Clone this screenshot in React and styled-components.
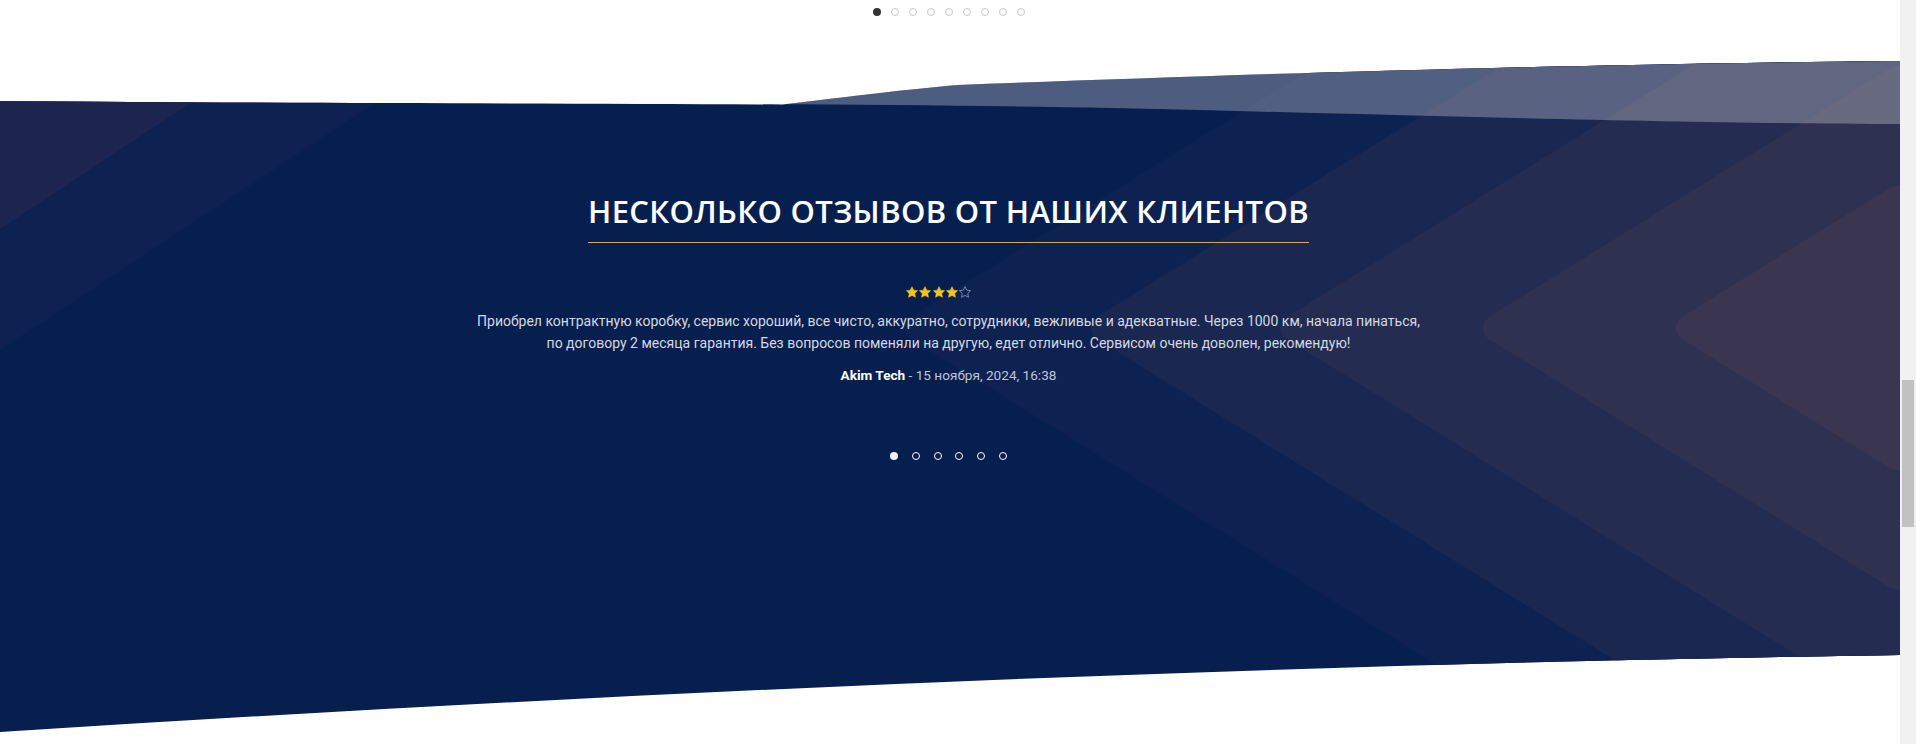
import React from 'react';
import styled, { createGlobalStyle } from 'styled-components';

const GlobalStyle = createGlobalStyle`
  html, body { margin: 0; padding: 0; background: #ffffff; overflow: hidden; }
  #root { height: 100vh; }
  * { box-sizing: border-box; }
`;

const Page = styled.div`
  display: flex;
  width: 100%;
  height: 744px;
  overflow: hidden;
  background: #ffffff;
`;

const Main = styled.main`
  flex: 1;
  min-width: 0;
  display: flex;
  flex-direction: column;
`;

const TopDots = styled.div`
  height: 40px;
  display: flex;
  justify-content: center;
  align-items: flex-start;
  gap: 10px;
  padding: 8px 3px 0 0;
`;

const TopDot = styled.span`
  width: 8px;
  height: 8px;
  border-radius: 50%;
  background: ${(p) => (p.$active ? '#333333' : 'transparent')};
  border: ${(p) => (p.$active ? 'none' : '1px solid #c8c8c8')};
`;

const Section = styled.section`
  position: relative;
  flex: 1;
  display: flex;
  flex-direction: column;
  align-items: center;
  padding: 153px 3px 0 0;
`;

const Backdrop = styled.svg`
  position: absolute;
  inset: 0;
  width: 100%;
  height: 100%;
  z-index: 0;
  display: block;
`;

const Content = styled.div`
  position: relative;
  z-index: 1;
  display: flex;
  flex-direction: column;
  align-items: center;
`;

const Title = styled.h2`
  margin: 0;
  font-family: 'Open Sans', 'Liberation Sans', sans-serif;
  font-weight: 600;
  font-size: 31px;
  line-height: 1.2;
  letter-spacing: 0.35px;
  color: #ffffff;
  text-transform: uppercase;
  padding-bottom: 12px;
  border-bottom: 1px solid #dca84a;
  white-space: nowrap;
`;

const Stars = styled.div`
  margin: 43px 20px 0 0;
  display: flex;
  gap: 1.3px;
  height: 12px;
`;

const StarIcon = styled.svg`
  width: 12px;
  height: 12px;
  display: block;
`;

const Quote = styled.p`
  margin: 12px 0 0;
  font-family: 'Roboto', 'Liberation Sans', sans-serif;
  font-size: 14px;
  line-height: 22px;
  color: #d4d8e0;
  text-align: center;
  white-space: nowrap;
`;

const Author = styled.div`
  margin-top: 10px;
  font-family: 'Roboto', 'Liberation Sans', sans-serif;
  font-size: 13.6px;
  line-height: 22px;
  color: #bfc5d2;
`;

const AuthorName = styled.strong`
  font-weight: 700;
  color: #ffffff;
`;

const Pager = styled.div`
  margin-top: 66px;
  display: flex;
  gap: 13.7px;
`;

const PagerDot = styled.span`
  width: 8px;
  height: 8px;
  border-radius: 50%;
  background: ${(p) => (p.$active ? '#f0f0f0' : 'transparent')};
  border: ${(p) => (p.$active ? 'none' : '1.6px solid #ffffff')};
`;

const ScrollTrack = styled.div`
  width: 16px;
  height: 100%;
  background: #f1f1f1;
  padding: 380px 2px 0 2px;
`;

const ScrollThumb = styled.div`
  width: 12px;
  height: 147px;
  background: #c1c1c1;
`;

const STAR = 'M12 2.2l2.95 6.1 6.7.95-4.85 4.7 1.15 6.65L12 17.45 6.05 20.6l1.15-6.65-4.85-4.7 6.7-.95z';

function Star({ filled }) {
  return (
    <StarIcon viewBox="1.6 1.4 20.8 20.2">
      <path
        d={STAR}
        fill={filled ? '#f3c41a' : 'none'}
        stroke={filled ? '#f3c41a' : '#7a89a8'}
        strokeWidth={filled ? 1 : 1.7}
        strokeLinejoin="round"
      />
    </StarIcon>
  );
}

const RHOMBI = [
  { w: 1014, c: '#0e2251' },
  { w: 828, c: '#192751' },
  { w: 638, c: '#242c51' },
  { w: 436, c: '#2f3151' },
  { w: 243, c: '#3a3652' },
];

const N_TOP = 'M0,61 C500,65 900,62 1200,70 C1500,78 1750,84 1900,84';
const L_TOP = 'M0,115 C600,100 800,58 958,45 C1200,36 1500,25 1900,21';
const BOTTOM = 'L1900,615 Q1000,628 0,692 Z';

function SectionBackdrop() {
  return (
    <Backdrop viewBox="0 0 1900 704" preserveAspectRatio="none" aria-hidden="true">
      <defs>
        <clipPath id="sectionShape">
          <path d={`${N_TOP} ${BOTTOM}`} />
          <path d={`${L_TOP} ${BOTTOM}`} />
        </clipPath>
      </defs>
      <g clipPath="url(#sectionShape)">
        <rect x="0" y="0" width="1900" height="704" fill="#071f4f" />
        <polygon points="0,0 470,0 0,310" fill="#0e2251" />
        <polygon points="0,0 286,0 0,189" fill="#1b2550" />
        {RHOMBI.map((r) => {
          const s = r.w / Math.SQRT2;
          return (
            <rect
              key={r.w}
              x={-s}
              y={-s}
              width={2 * s}
              height={2 * s}
              rx="28"
              fill={r.c}
              transform="translate(1907,288) scale(1,0.62) rotate(45)"
            />
          );
        })}
        <path
          d="M0,0 L1900,0 L1900,84 C1750,84 1500,78 1200,70 C900,62 500,65 0,61 Z"
          fill="#ffffff"
          fillOpacity="0.28"
        />
      </g>
    </Backdrop>
  );
}

export default function App() {
  return (
    <>
      <GlobalStyle />
      <Page>
        <Main>
          <TopDots>
            {Array.from({ length: 9 }).map((_, i) => (
              <TopDot key={i} $active={i === 0} />
            ))}
          </TopDots>
          <Section>
            <SectionBackdrop />
            <Content>
              <Title>Несколько отзывов от наших клиентов</Title>
              <Stars>
                {[1, 2, 3, 4, 5].map((n) => (
                  <Star key={n} filled={n <= 4} />
                ))}
              </Stars>
              <Quote>
                Приобрел контрактную коробку, сервис хороший, все чисто, аккуратно, сотрудники, вежливые и адекватные. Через 1000 км, начала пинаться,
                <br />
                по договору 2 месяца гарантия. Без вопросов поменяли на другую, едет отлично. Сервисом очень доволен, рекомендую!
              </Quote>
              <Author>
                <AuthorName>Akim Tech</AuthorName> - 15 ноября, 2024, 16:38
              </Author>
              <Pager>
                {Array.from({ length: 6 }).map((_, i) => (
                  <PagerDot key={i} $active={i === 0} />
                ))}
              </Pager>
            </Content>
          </Section>
        </Main>
        <ScrollTrack>
          <ScrollThumb />
        </ScrollTrack>
      </Page>
    </>
  );
}
